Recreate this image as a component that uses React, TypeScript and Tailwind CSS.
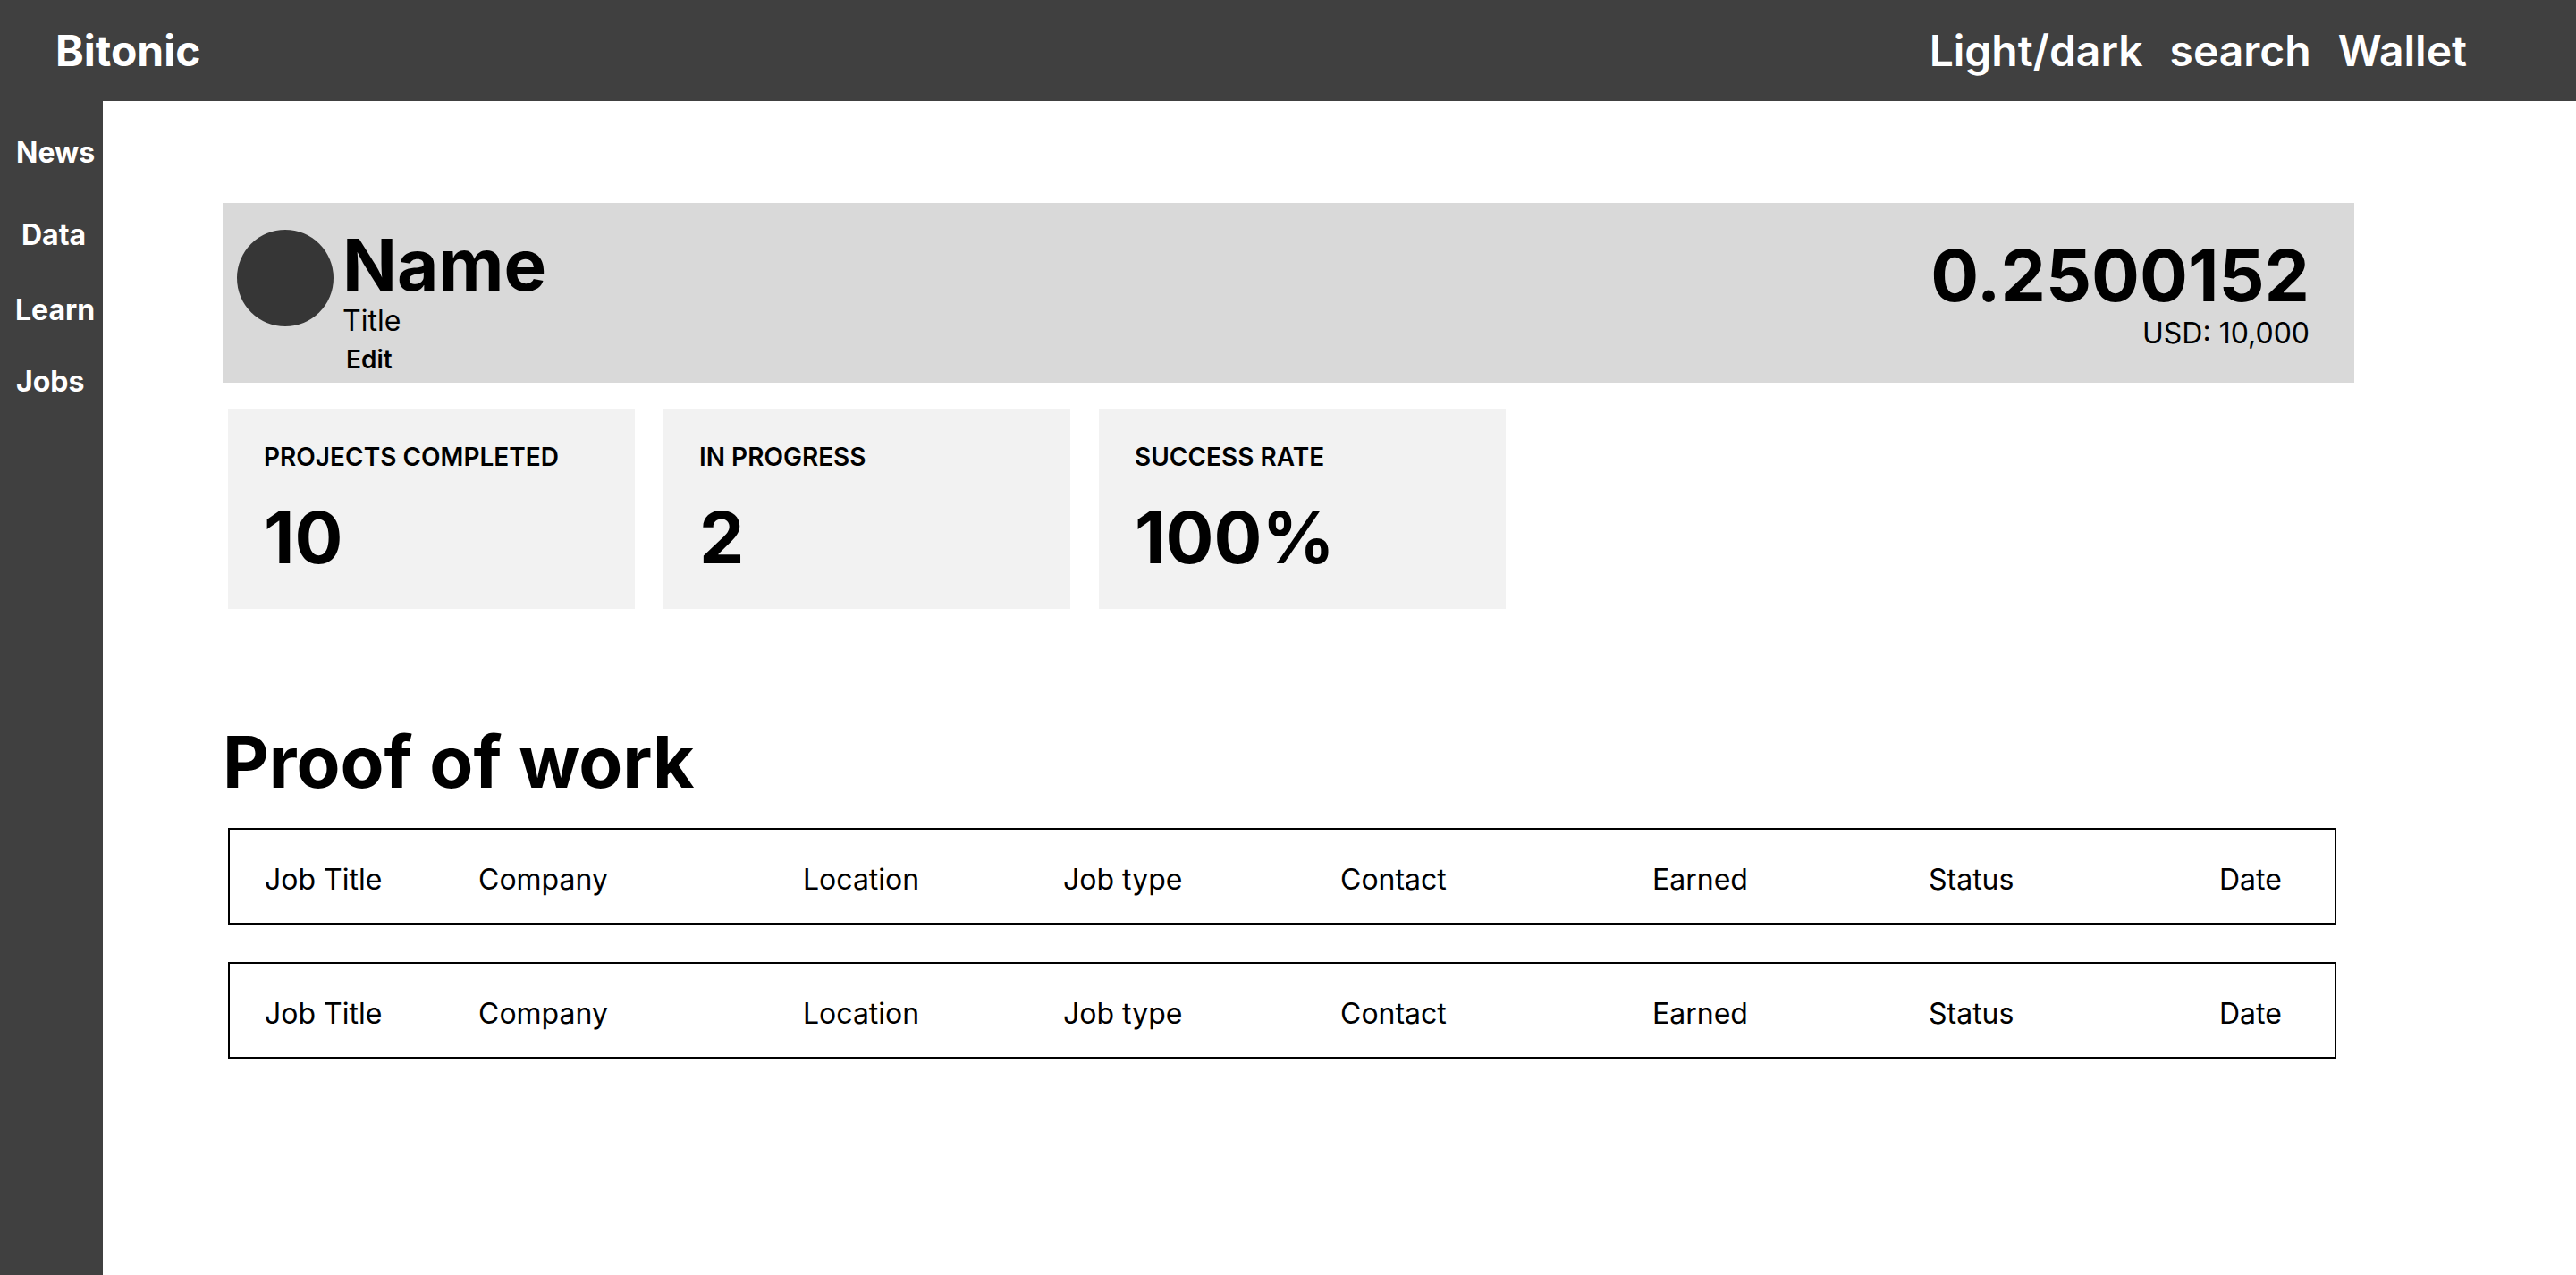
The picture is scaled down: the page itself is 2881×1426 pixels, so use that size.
const navItems = [
  { label: "News", className: "mt-[42px] pl-[18px]" },
  { label: "Data", className: "mt-[60px] pl-[24px]" },
  { label: "Learn", className: "mt-[52px] pl-[17px]" },
  { label: "Jobs", className: "mt-[48px] pl-[18px]" },
];

const stats = [
  { label: "PROJECTS COMPLETED", value: "10" },
  { label: "IN PROGRESS", value: "2" },
  { label: "SUCCESS RATE", value: "100%" },
];

const columns = ["Job Title", "Company", "Location", "Job type", "Contact", "Earned", "Status", "Date"];

function Header() {
  return (
    <header className="flex h-[113px] shrink-0 items-center justify-between bg-[#404040] pl-[62px] pr-[122px] text-white">
      <div className="text-[48px] font-bold leading-none">Bitonic</div>
      <nav className="flex items-center gap-[30px] text-[48px] font-semibold leading-none">
        <span>Light/dark</span>
        <span>search</span>
        <span>Wallet</span>
      </nav>
    </header>
  );
}

function Sidebar() {
  return (
    <aside className="flex w-[115px] shrink-0 flex-col bg-[#404040] text-white">
      {navItems.map((item) => (
        <a key={item.label} className={`block text-[32px] font-bold leading-none ${item.className}`}>
          {item.label}
        </a>
      ))}
    </aside>
  );
}

function ProfileCard() {
  return (
    <section className="flex h-[201px] w-[2384px] items-start justify-between bg-[#d9d9d9] pl-[16px] pr-[50px] pt-[29px]">
      <div className="flex items-start gap-[10px]">
        <div className="mt-[1px] h-[108px] w-[108px] rounded-full bg-[#363636]" />
        <div className="flex flex-col">
          <h1 className="text-[80px] font-bold leading-none">Name</h1>
          <p className="mt-[7px] text-[32px] leading-none">Title</p>
          <button className="ml-[4px] mt-[13px] text-left text-[28px] font-semibold leading-none">Edit</button>
        </div>
      </div>
      <div className="mt-[12px] flex flex-col items-end">
        <div className="text-[80px] font-bold leading-none">0.2500152</div>
        <div className="mt-[9px] text-[32px] leading-none">USD: 10,000</div>
      </div>
    </section>
  );
}

function StatCard({ label, value }: { label: string; value: string }) {
  return (
    <div className="h-[224px] w-[455px] bg-[#f2f2f2] pl-[40px] pt-[40px]">
      <div className="text-[28px] font-semibold leading-none">{label}</div>
      <div className="mt-[36px] text-[80px] font-bold leading-none">{value}</div>
    </div>
  );
}

function WorkRow() {
  return (
    <div className="grid h-[108px] w-[2358px] grid-cols-[239px_363px_291px_310px_349px_309px_325px_1fr] border-2 border-black pl-[39px] pt-[40px] text-[32px] leading-none">
      {columns.map((c) => (
        <span key={c}>{c}</span>
      ))}
    </div>
  );
}

export default function App() {
  return (
    <div className="flex min-h-screen flex-col bg-white text-black" style={{ fontFamily: "Inter, 'Noto Sans', sans-serif" }}>
      <Header />
      <div className="flex flex-1">
        <Sidebar />
        <main className="flex-1 pl-[134px] pt-[114px]">
          <ProfileCard />
          <div className="ml-[6px] mt-[29px] flex gap-[32px]">
            {stats.map((s) => (
              <StatCard key={s.label} label={s.label} value={s.value} />
            ))}
          </div>
          <h2 className="mt-[131px] text-[80px] font-bold leading-none">Proof of work</h2>
          <div className="ml-[6px] mt-[34px] flex flex-col gap-[42px]">
            <WorkRow />
            <WorkRow />
          </div>
        </main>
      </div>
    </div>
  );
}
